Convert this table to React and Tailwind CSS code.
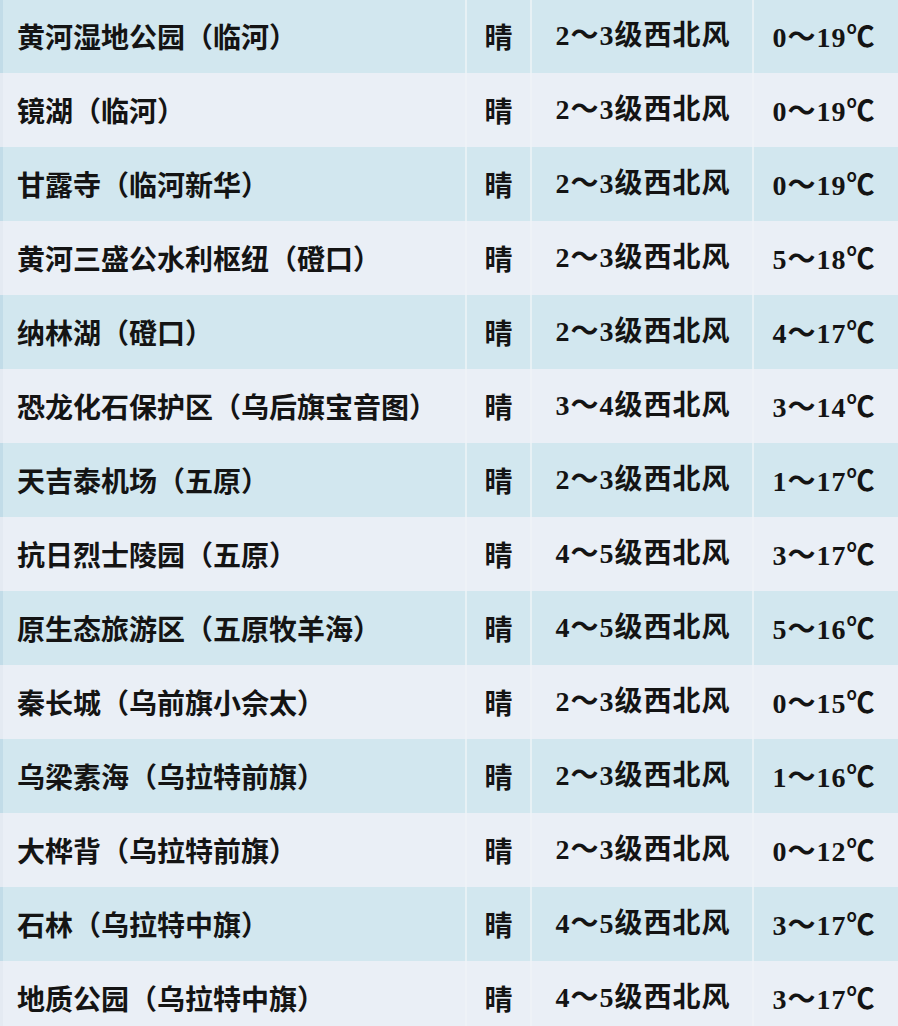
import React from "react";

const rows = [
  ["黄河湿地公园（临河）", "2～3级西北风", "0～19"],
  ["镜湖（临河）", "2～3级西北风", "0～19"],
  ["甘露寺（临河新华）", "2～3级西北风", "0～19"],
  ["黄河三盛公水利枢纽（磴口）", "2～3级西北风", "5～18"],
  ["纳林湖（磴口）", "2～3级西北风", "4～17"],
  ["恐龙化石保护区（乌后旗宝音图）", "3～4级西北风", "3～14"],
  ["天吉泰机场（五原）", "2～3级西北风", "1～17"],
  ["抗日烈士陵园（五原）", "4～5级西北风", "3～17"],
  ["原生态旅游区（五原牧羊海）", "4～5级西北风", "5～16"],
  ["秦长城（乌前旗小佘太）", "2～3级西北风", "0～15"],
  ["乌梁素海（乌拉特前旗）", "2～3级西北风", "1～16"],
  ["大桦背（乌拉特前旗）", "2～3级西北风", "0～12"],
  ["石林（乌拉特中旗）", "4～5级西北风", "3～17"],
  ["地质公园（乌拉特中旗）", "4～5级西北风", "3～17"],
];

const cjk = { fontFamily: '"Noto Sans CJK SC", sans-serif' };
const num = { fontFamily: '"Liberation Serif", "Noto Sans CJK SC", serif' };

export default function App() {
  return (
    <div className="w-[898px] h-[1026px] overflow-hidden bg-[#eaf0f6]">
      <div className="-mt-px flex flex-col">
        {rows.map((r, i) => {
          const blue = i % 2 === 0;
          const bg = blue ? "bg-[#d2e7ef]" : "bg-[#eaeff6]";
          const sep = blue ? "border-[#e7f1f5]" : "border-[#eef2f7]";
          return (
            <div
              key={i}
              className={`flex h-[74px] items-center text-[28px] leading-none font-bold text-[#141414] ${bg} ${
                blue
                  ? "border-l-[3px] border-l-[#c2dce8]"
                  : "border-l-[3px] border-l-[#e4eaf2]"
              }`}
            >
              <div
                className={`w-[464px] shrink-0 h-full flex items-center pl-[14px] border-r-2 ${sep}`}
                style={cjk}
              >
                <span className="whitespace-nowrap">{r[0]}</span>
              </div>
              <div
                className={`w-[65px] shrink-0 h-full flex items-center justify-center border-r-2 ${sep}`}
                style={cjk}
              >
                晴
              </div>
              <div
                className={`w-[222px] shrink-0 h-full flex items-center justify-center pl-[2px] border-r-2 ${sep}`}
                style={num}
              >
                <span className="whitespace-nowrap tracking-[1px]">{r[1]}</span>
              </div>
              <div
                className="flex-1 h-full flex items-center justify-center pr-[4px]"
                style={num}
              >
                <span className="whitespace-nowrap tracking-[1px]">
                  {r[2]}
                  <span style={cjk}>℃</span>
                </span>
              </div>
            </div>
          );
        })}
      </div>
    </div>
  );
}
